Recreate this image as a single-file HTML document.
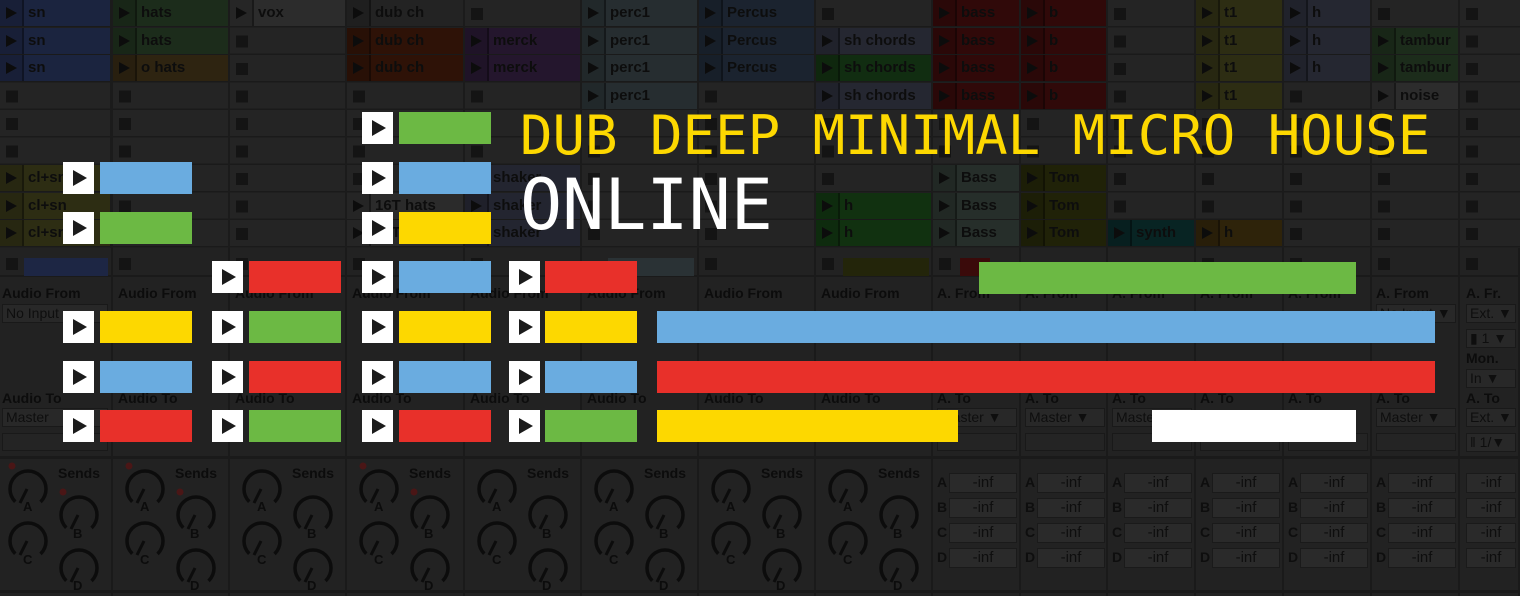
<!DOCTYPE html>
<html><head><meta charset="utf-8"><style>
*{margin:0;padding:0;box-sizing:border-box}
body{width:1520px;height:596px;overflow:hidden;background:#1b1b1b;position:relative;font-family:"Liberation Sans",sans-serif}
.col{position:absolute;top:0;height:248px;background:repeating-linear-gradient(to bottom,#242424 0 26px,#1a1a1a 26px 27.5px)}
.col::before{content:"";position:absolute;left:6px;top:8px;width:12px;height:240px;background:linear-gradient(to bottom,#141414 0 12px,transparent 12px) 0 0/12px 27.5px repeat-y}
.c{position:absolute;height:26px;font-size:15px;font-weight:bold;color:#151515;line-height:26px;padding-left:28px;white-space:nowrap;overflow:hidden;filter:brightness(0.62)}
.c::before{content:"";position:absolute;left:0;top:0;width:22px;height:26px;background:rgba(0,0,0,.12);border-right:2px solid rgba(0,0,0,.35)}
.c::after{content:"";position:absolute;left:6px;top:7px;border-left:11px solid #141414;border-top:6px solid transparent;border-bottom:6px solid transparent}
.low{position:absolute;top:248px;height:348px;background:#222;border-right:2px solid #1a1a1a}
.stop{position:absolute;top:258px;width:12px;height:12px;background:#141414}
.lb{position:absolute;font-size:14px;font-weight:bold;color:#0c0c0c;white-space:nowrap}
.dd{position:absolute;height:19px;background:#282828;border:1px solid #191919;font-size:14px;color:#0e0e0e;line-height:17px;padding-left:3px;white-space:nowrap;overflow:hidden}
.bx{position:absolute;height:18px;border:1px solid #191919;background:#242424}
.inf{position:absolute;width:68px;height:20px;background:#2a2a2a;border:1px solid #1a1a1a;font-size:15px;color:#0e0e0e;text-align:center;line-height:18px}
.ab{position:absolute;font-size:14px;color:#0e0e0e;font-weight:bold}
.ic{position:absolute;width:31px;height:32px;background:#fff}
.ic::after{content:"";position:absolute;left:10px;top:8px;border-left:14px solid #1b1b1b;border-top:8px solid transparent;border-bottom:8px solid transparent}
.b{position:absolute;height:32px}
.g{background:#6cb944}.u{background:#6aace0}.y{background:#fdd800}.r{background:#e8302a}.w{background:#fff}
.t{position:absolute;font-family:"DejaVu Sans Mono","Liberation Mono",monospace;white-space:nowrap}
</style></head><body>
<div class="col" style="left:0;width:110px"></div>
<div class="col" style="left:113px;width:115px"></div>
<div class="col" style="left:230px;width:115px"></div>
<div class="col" style="left:347px;width:116px"></div>
<div class="col" style="left:465px;width:115px"></div>
<div class="col" style="left:582px;width:115px"></div>
<div class="col" style="left:699px;width:115px"></div>
<div class="col" style="left:816px;width:115px"></div>
<div class="col" style="left:933px;width:86px"></div>
<div class="col" style="left:1021px;width:85px"></div>
<div class="col" style="left:1108px;width:86px"></div>
<div class="col" style="left:1196px;width:86px"></div>
<div class="col" style="left:1284px;width:86px"></div>
<div class="col" style="left:1372px;width:86px"></div>
<div class="col" style="left:1460px;width:60px"></div>

<div class="c" style="left:0;top:0;width:110px;background:#2c3a66">sn</div>
<div class="c" style="left:0;top:27.5px;width:110px;background:#2c3a66">sn</div>
<div class="c" style="left:0;top:55px;width:110px;background:#2c3a66">sn</div>
<div class="c" style="left:0;top:165px;width:110px;background:#48481f">cl+sn</div>
<div class="c" style="left:0;top:192.5px;width:110px;background:#48481f">cl+sn</div>
<div class="c" style="left:0;top:220px;width:110px;background:#48481f">cl+sn</div>
<div class="c" style="left:113px;top:0;width:115px;background:#2d472b">hats</div>
<div class="c" style="left:113px;top:27.5px;width:115px;background:#2d472b">hats</div>
<div class="c" style="left:113px;top:55px;width:115px;background:#4a3a1c">o hats</div>
<div class="c" style="left:230px;top:0;width:115px;background:#474747">vox</div>
<div class="c" style="left:347px;top:0;width:116px;background:#393939">dub ch</div>
<div class="c" style="left:347px;top:27.5px;width:116px;background:#4a1d0c">dub ch</div>
<div class="c" style="left:347px;top:55px;width:116px;background:#4a1d0c">dub ch</div>
<div class="c" style="left:347px;top:192.5px;width:116px;background:#454545">16T hats</div>
<div class="c" style="left:347px;top:220px;width:116px;background:#454545">16T</div>
<div class="c" style="left:465px;top:27.5px;width:115px;background:#3a2348">merck</div>
<div class="c" style="left:465px;top:55px;width:115px;background:#3a2348">merck</div>
<div class="c" style="left:465px;top:165px;width:115px;background:#393c4e">shaker</div>
<div class="c" style="left:465px;top:192.5px;width:115px;background:#393c4e">shaker</div>
<div class="c" style="left:465px;top:220px;width:115px;background:#393c4e">shaker</div>
<div class="c" style="left:582px;top:0;width:115px;background:#3d494d">perc1</div>
<div class="c" style="left:582px;top:27.5px;width:115px;background:#3d494d">perc1</div>
<div class="c" style="left:582px;top:55px;width:115px;background:#3d494d">perc1</div>
<div class="c" style="left:582px;top:82.5px;width:115px;background:#3d494d">perc1</div>
<div class="c" style="left:699px;top:0;width:115px;background:#2b394c">Percus</div>
<div class="c" style="left:699px;top:27.5px;width:115px;background:#2b394c">Percus</div>
<div class="c" style="left:699px;top:55px;width:115px;background:#2b394c">Percus</div>
<div class="c" style="left:816px;top:27.5px;width:115px;background:#3c3f4f">sh chords</div>
<div class="c" style="left:816px;top:55px;width:115px;background:#1c481b">sh chords</div>
<div class="c" style="left:816px;top:82.5px;width:115px;background:#3c3f4f">sh chords</div>
<div class="c" style="left:816px;top:192.5px;width:115px;background:#1b4f1a">h</div>
<div class="c" style="left:816px;top:220px;width:115px;background:#1b4f1a">h</div>
<div class="c" style="left:933px;top:0;width:86px;background:#4d0f0f">bass</div>
<div class="c" style="left:933px;top:27.5px;width:86px;background:#4d0f0f">bass</div>
<div class="c" style="left:933px;top:55px;width:86px;background:#4d0f0f">bass</div>
<div class="c" style="left:933px;top:82.5px;width:86px;background:#4d0f0f">bass</div>
<div class="c" style="left:933px;top:165px;width:86px;background:#3d4a43">Bass</div>
<div class="c" style="left:933px;top:192.5px;width:86px;background:#3d4a43">Bass</div>
<div class="c" style="left:933px;top:220px;width:86px;background:#3d4a43">Bass</div>
<div class="c" style="left:1021px;top:0;width:85px;background:#4d0f0f">b</div>
<div class="c" style="left:1021px;top:27.5px;width:85px;background:#4d0f0f">b</div>
<div class="c" style="left:1021px;top:55px;width:85px;background:#4d0f0f">b</div>
<div class="c" style="left:1021px;top:82.5px;width:85px;background:#4d0f0f">b</div>
<div class="c" style="left:1021px;top:165px;width:85px;background:#34370d">Tom</div>
<div class="c" style="left:1021px;top:192.5px;width:85px;background:#34370d">Tom</div>
<div class="c" style="left:1021px;top:220px;width:85px;background:#34370d">Tom</div>
<div class="c" style="left:1108px;top:220px;width:86px;background:#0d3a39">synth</div>
<div class="c" style="left:1196px;top:0;width:86px;background:#48481f">t1</div>
<div class="c" style="left:1196px;top:27.5px;width:86px;background:#48481f">t1</div>
<div class="c" style="left:1196px;top:55px;width:86px;background:#48481f">t1</div>
<div class="c" style="left:1196px;top:82.5px;width:86px;background:#48481f">t1</div>
<div class="c" style="left:1196px;top:220px;width:86px;background:#4a3810">h</div>
<div class="c" style="left:1284px;top:0;width:86px;background:#3c3f4f">h</div>
<div class="c" style="left:1284px;top:27.5px;width:86px;background:#3c3f4f">h</div>
<div class="c" style="left:1284px;top:55px;width:86px;background:#3c3f4f">h</div>
<div class="c" style="left:1372px;top:27.5px;width:86px;background:#2d472b">tambur</div>
<div class="c" style="left:1372px;top:55px;width:86px;background:#2d472b">tambur</div>
<div class="c" style="left:1372px;top:82.5px;width:86px;background:#474747">noise</div>

<div class="low" style="left:0;width:113px"></div>
<div class="low" style="left:113px;width:117px"></div>
<div class="low" style="left:230px;width:117px"></div>
<div class="low" style="left:347px;width:118px"></div>
<div class="low" style="left:465px;width:117px"></div>
<div class="low" style="left:582px;width:117px"></div>
<div class="low" style="left:699px;width:117px"></div>
<div class="low" style="left:816px;width:117px"></div>
<div class="low" style="left:933px;width:88px"></div>
<div class="low" style="left:1021px;width:87px"></div>
<div class="low" style="left:1108px;width:88px"></div>
<div class="low" style="left:1196px;width:88px"></div>
<div class="low" style="left:1284px;width:88px"></div>
<div class="low" style="left:1372px;width:88px"></div>
<div class="low" style="left:1460px;width:60px"></div>
<div style="position:absolute;left:0;top:456px;width:1520px;height:3px;background:#1a1a1a"></div>
<div style="position:absolute;left:0;top:590px;width:1520px;height:3px;background:#1a1a1a"></div>
<div style="position:absolute;left:0;top:275px;width:1520px;height:2px;background:#1a1a1a"></div>

<div class="stop" style="left:6px"></div><div style="position:absolute;left:24px;top:258px;width:84px;height:18px;background:#1d2644"></div>
<div class="stop" style="left:119px"></div><div class="stop" style="left:236px"></div><div class="stop" style="left:353px"></div>
<div class="stop" style="left:471px"></div><div style="position:absolute;left:608px;top:258px;width:86px;height:18px;background:#2a3235"></div>
<div class="stop" style="left:705px"></div><div class="stop" style="left:822px"></div><div style="position:absolute;left:843px;top:258px;width:86px;height:18px;background:#23250a"></div>
<div class="stop" style="left:939px"></div><div style="position:absolute;left:960px;top:258px;width:30px;height:18px;background:#3a0a0a"></div>
<div class="stop" style="left:1202px"></div><div class="stop" style="left:1290px"></div><div class="stop" style="left:1378px"></div><div class="stop" style="left:1466px"></div>

<div class="lb" style="left:2px;top:285px">Audio From</div>
<div class="lb" style="left:118px;top:285px">Audio From</div>
<div class="lb" style="left:235px;top:285px">Audio From</div>
<div class="lb" style="left:352px;top:285px">Audio From</div>
<div class="lb" style="left:470px;top:285px">Audio From</div>
<div class="lb" style="left:587px;top:285px">Audio From</div>
<div class="lb" style="left:704px;top:285px">Audio From</div>
<div class="lb" style="left:821px;top:285px">Audio From</div>
<div class="lb" style="left:937px;top:285px">A. From</div>
<div class="lb" style="left:1025px;top:285px">A. From</div>
<div class="lb" style="left:1112px;top:285px">A. From</div>
<div class="lb" style="left:1200px;top:285px">A. From</div>
<div class="lb" style="left:1288px;top:285px">A. From</div>
<div class="lb" style="left:1376px;top:285px">A. From</div>
<div class="lb" style="left:1466px;top:285px">A. Fr.</div>
<div class="dd" style="left:2px;top:304px;width:106px">No Input</div>
<div class="dd" style="left:1376px;top:304px;width:80px">No Input ▼</div>
<div class="dd" style="left:1466px;top:304px;width:50px">Ext. ▼</div>
<div class="dd" style="left:1466px;top:329px;width:50px">▮ 1 ▼</div>
<div class="lb" style="left:1466px;top:350px">Mon.</div>
<div class="dd" style="left:1466px;top:369px;width:50px">In ▼</div>
<div class="lb" style="left:2px;top:390px">Audio To</div>
<div class="lb" style="left:118px;top:390px">Audio To</div>
<div class="lb" style="left:235px;top:390px">Audio To</div>
<div class="lb" style="left:352px;top:390px">Audio To</div>
<div class="lb" style="left:470px;top:390px">Audio To</div>
<div class="lb" style="left:587px;top:390px">Audio To</div>
<div class="lb" style="left:704px;top:390px">Audio To</div>
<div class="lb" style="left:821px;top:390px">Audio To</div>
<div class="lb" style="left:937px;top:390px">A. To</div>
<div class="lb" style="left:1025px;top:390px">A. To</div>
<div class="lb" style="left:1112px;top:390px">A. To</div>
<div class="lb" style="left:1200px;top:390px">A. To</div>
<div class="lb" style="left:1288px;top:390px">A. To</div>
<div class="lb" style="left:1376px;top:390px">A. To</div>
<div class="lb" style="left:1466px;top:390px">A. To</div>
<div class="dd" style="left:2px;top:408px;width:106px">Master</div>
<div class="dd" style="left:937px;top:408px;width:80px">Master ▼</div>
<div class="dd" style="left:1025px;top:408px;width:80px">Master ▼</div>
<div class="dd" style="left:1112px;top:408px;width:80px">Master ▼</div>
<div class="dd" style="left:1376px;top:408px;width:80px">Master ▼</div>
<div class="dd" style="left:1466px;top:408px;width:50px">Ext. ▼</div>
<div class="bx" style="left:2px;top:433px;width:106px"></div>
<div class="bx" style="left:937px;top:433px;width:80px"></div>
<div class="bx" style="left:1025px;top:433px;width:80px"></div>
<div class="bx" style="left:1112px;top:433px;width:80px"></div>
<div class="bx" style="left:1200px;top:433px;width:80px"></div>
<div class="bx" style="left:1288px;top:433px;width:80px"></div>
<div class="bx" style="left:1376px;top:433px;width:80px"></div>
<div class="dd" style="left:1466px;top:433px;width:50px">ǁ 1/▼</div>

<div class="ab" style="left:937px;top:474px">A</div><div class="ab" style="left:937px;top:499px">B</div><div class="ab" style="left:937px;top:524px">C</div><div class="ab" style="left:937px;top:549px">D</div>
<div class="inf" style="left:949px;top:473px">-inf</div><div class="inf" style="left:949px;top:498px">-inf</div><div class="inf" style="left:949px;top:523px">-inf</div><div class="inf" style="left:949px;top:548px">-inf</div>
<div class="ab" style="left:1025px;top:474px">A</div><div class="ab" style="left:1025px;top:499px">B</div><div class="ab" style="left:1025px;top:524px">C</div><div class="ab" style="left:1025px;top:549px">D</div>
<div class="inf" style="left:1037px;top:473px">-inf</div><div class="inf" style="left:1037px;top:498px">-inf</div><div class="inf" style="left:1037px;top:523px">-inf</div><div class="inf" style="left:1037px;top:548px">-inf</div>
<div class="ab" style="left:1112px;top:474px">A</div><div class="ab" style="left:1112px;top:499px">B</div><div class="ab" style="left:1112px;top:524px">C</div><div class="ab" style="left:1112px;top:549px">D</div>
<div class="inf" style="left:1124px;top:473px">-inf</div><div class="inf" style="left:1124px;top:498px">-inf</div><div class="inf" style="left:1124px;top:523px">-inf</div><div class="inf" style="left:1124px;top:548px">-inf</div>
<div class="ab" style="left:1200px;top:474px">A</div><div class="ab" style="left:1200px;top:499px">B</div><div class="ab" style="left:1200px;top:524px">C</div><div class="ab" style="left:1200px;top:549px">D</div>
<div class="inf" style="left:1212px;top:473px">-inf</div><div class="inf" style="left:1212px;top:498px">-inf</div><div class="inf" style="left:1212px;top:523px">-inf</div><div class="inf" style="left:1212px;top:548px">-inf</div>
<div class="ab" style="left:1288px;top:474px">A</div><div class="ab" style="left:1288px;top:499px">B</div><div class="ab" style="left:1288px;top:524px">C</div><div class="ab" style="left:1288px;top:549px">D</div>
<div class="inf" style="left:1300px;top:473px">-inf</div><div class="inf" style="left:1300px;top:498px">-inf</div><div class="inf" style="left:1300px;top:523px">-inf</div><div class="inf" style="left:1300px;top:548px">-inf</div>
<div class="ab" style="left:1376px;top:474px">A</div><div class="ab" style="left:1376px;top:499px">B</div><div class="ab" style="left:1376px;top:524px">C</div><div class="ab" style="left:1376px;top:549px">D</div>
<div class="inf" style="left:1388px;top:473px">-inf</div><div class="inf" style="left:1388px;top:498px">-inf</div><div class="inf" style="left:1388px;top:523px">-inf</div><div class="inf" style="left:1388px;top:548px">-inf</div>
<div class="inf" style="left:1466px;top:473px;width:50px">-inf</div><div class="inf" style="left:1466px;top:498px;width:50px">-inf</div><div class="inf" style="left:1466px;top:523px;width:50px">-inf</div><div class="inf" style="left:1466px;top:548px;width:50px">-inf</div>

<svg style="position:absolute;left:0;top:0" width="933" height="596">
<defs><g id="k"><circle r="18" fill="none" stroke="#0c0c0c" stroke-width="3.5" stroke-dasharray="85 28" transform="rotate(135)"/><line x1="-1" y1="0" x2="-8" y2="14" stroke="#0c0c0c" stroke-width="3"/></g></defs>
<g font-family="Liberation Sans" font-weight="bold" fill="#0c0c0c">
<g transform="translate(0,0)"><use href="#k" x="28" y="489"/><use href="#k" x="79" y="515"/><use href="#k" x="28" y="541"/><use href="#k" x="79" y="568"/><circle cx="12" cy="466" r="3.5" fill="#4a1616"/><circle cx="63" cy="492" r="3.5" fill="#4a1616"/><text x="58" y="478" font-size="14">Sends</text><text x="23" y="511" font-size="13">A</text><text x="73" y="538" font-size="13">B</text><text x="23" y="564" font-size="13">C</text><text x="73" y="590" font-size="13">D</text></g>
<g transform="translate(117,0)"><use href="#k" x="28" y="489"/><use href="#k" x="79" y="515"/><use href="#k" x="28" y="541"/><use href="#k" x="79" y="568"/><circle cx="12" cy="466" r="3.5" fill="#4a1616"/><circle cx="63" cy="492" r="3.5" fill="#4a1616"/><text x="58" y="478" font-size="14">Sends</text><text x="23" y="511" font-size="13">A</text><text x="73" y="538" font-size="13">B</text><text x="23" y="564" font-size="13">C</text><text x="73" y="590" font-size="13">D</text></g>
<g transform="translate(234,0)"><use href="#k" x="28" y="489"/><use href="#k" x="79" y="515"/><use href="#k" x="28" y="541"/><use href="#k" x="79" y="568"/><text x="58" y="478" font-size="14">Sends</text><text x="23" y="511" font-size="13">A</text><text x="73" y="538" font-size="13">B</text><text x="23" y="564" font-size="13">C</text><text x="73" y="590" font-size="13">D</text></g>
<g transform="translate(351,0)"><use href="#k" x="28" y="489"/><use href="#k" x="79" y="515"/><use href="#k" x="28" y="541"/><use href="#k" x="79" y="568"/><circle cx="12" cy="466" r="3.5" fill="#4a1616"/><circle cx="63" cy="492" r="3.5" fill="#4a1616"/><text x="58" y="478" font-size="14">Sends</text><text x="23" y="511" font-size="13">A</text><text x="73" y="538" font-size="13">B</text><text x="23" y="564" font-size="13">C</text><text x="73" y="590" font-size="13">D</text></g>
<g transform="translate(469,0)"><use href="#k" x="28" y="489"/><use href="#k" x="79" y="515"/><use href="#k" x="28" y="541"/><use href="#k" x="79" y="568"/><text x="58" y="478" font-size="14">Sends</text><text x="23" y="511" font-size="13">A</text><text x="73" y="538" font-size="13">B</text><text x="23" y="564" font-size="13">C</text><text x="73" y="590" font-size="13">D</text></g>
<g transform="translate(586,0)"><use href="#k" x="28" y="489"/><use href="#k" x="79" y="515"/><use href="#k" x="28" y="541"/><use href="#k" x="79" y="568"/><text x="58" y="478" font-size="14">Sends</text><text x="23" y="511" font-size="13">A</text><text x="73" y="538" font-size="13">B</text><text x="23" y="564" font-size="13">C</text><text x="73" y="590" font-size="13">D</text></g>
<g transform="translate(703,0)"><use href="#k" x="28" y="489"/><use href="#k" x="79" y="515"/><use href="#k" x="28" y="541"/><use href="#k" x="79" y="568"/><text x="58" y="478" font-size="14">Sends</text><text x="23" y="511" font-size="13">A</text><text x="73" y="538" font-size="13">B</text><text x="23" y="564" font-size="13">C</text><text x="73" y="590" font-size="13">D</text></g>
<g transform="translate(820,0)"><use href="#k" x="28" y="489"/><use href="#k" x="79" y="515"/><use href="#k" x="28" y="541"/><use href="#k" x="79" y="568"/><text x="58" y="478" font-size="14">Sends</text><text x="23" y="511" font-size="13">A</text><text x="73" y="538" font-size="13">B</text><text x="23" y="564" font-size="13">C</text><text x="73" y="590" font-size="13">D</text></g>
</g></svg>

<div class="ic" style="left:362px;top:112px"></div><div class="b g" style="left:399px;top:112px;width:92px"></div>
<div class="ic" style="left:63px;top:162px"></div><div class="b u" style="left:100px;top:162px;width:92px"></div>
<div class="ic" style="left:362px;top:162px"></div><div class="b u" style="left:399px;top:162px;width:92px"></div>
<div class="ic" style="left:63px;top:212px"></div><div class="b g" style="left:100px;top:212px;width:92px"></div>
<div class="ic" style="left:362px;top:212px"></div><div class="b y" style="left:399px;top:212px;width:92px"></div>
<div class="ic" style="left:212px;top:261px"></div><div class="b r" style="left:249px;top:261px;width:92px"></div>
<div class="ic" style="left:362px;top:261px"></div><div class="b u" style="left:399px;top:261px;width:92px"></div>
<div class="ic" style="left:509px;top:261px"></div><div class="b r" style="left:545px;top:261px;width:92px"></div>
<div class="b g" style="left:979px;top:262px;width:377px"></div>
<div class="ic" style="left:63px;top:311px"></div><div class="b y" style="left:100px;top:311px;width:92px"></div>
<div class="ic" style="left:212px;top:311px"></div><div class="b g" style="left:249px;top:311px;width:92px"></div>
<div class="ic" style="left:362px;top:311px"></div><div class="b y" style="left:399px;top:311px;width:92px"></div>
<div class="ic" style="left:509px;top:311px"></div><div class="b y" style="left:545px;top:311px;width:92px"></div>
<div class="b u" style="left:657px;top:311px;width:778px"></div>
<div class="ic" style="left:63px;top:361px"></div><div class="b u" style="left:100px;top:361px;width:92px"></div>
<div class="ic" style="left:212px;top:361px"></div><div class="b r" style="left:249px;top:361px;width:92px"></div>
<div class="ic" style="left:362px;top:361px"></div><div class="b u" style="left:399px;top:361px;width:92px"></div>
<div class="ic" style="left:509px;top:361px"></div><div class="b u" style="left:545px;top:361px;width:92px"></div>
<div class="b r" style="left:657px;top:361px;width:778px"></div>
<div class="ic" style="left:63px;top:410px"></div><div class="b r" style="left:100px;top:410px;width:92px"></div>
<div class="ic" style="left:212px;top:410px"></div><div class="b g" style="left:249px;top:410px;width:92px"></div>
<div class="ic" style="left:362px;top:410px"></div><div class="b r" style="left:399px;top:410px;width:92px"></div>
<div class="ic" style="left:509px;top:410px"></div><div class="b g" style="left:545px;top:410px;width:92px"></div>
<div class="b y" style="left:657px;top:410px;width:301px"></div>
<div class="b w" style="left:1152px;top:410px;width:204px"></div>

<div class="t" style="left:520px;top:104px;font-size:54px;color:#fdd800;line-height:64px">DUB DEEP MINIMAL MICRO HOUSE</div>
<div class="t" style="left:520px;top:167px;font-size:70px;color:#fff;line-height:76px">ONLINE</div>
</body></html>
